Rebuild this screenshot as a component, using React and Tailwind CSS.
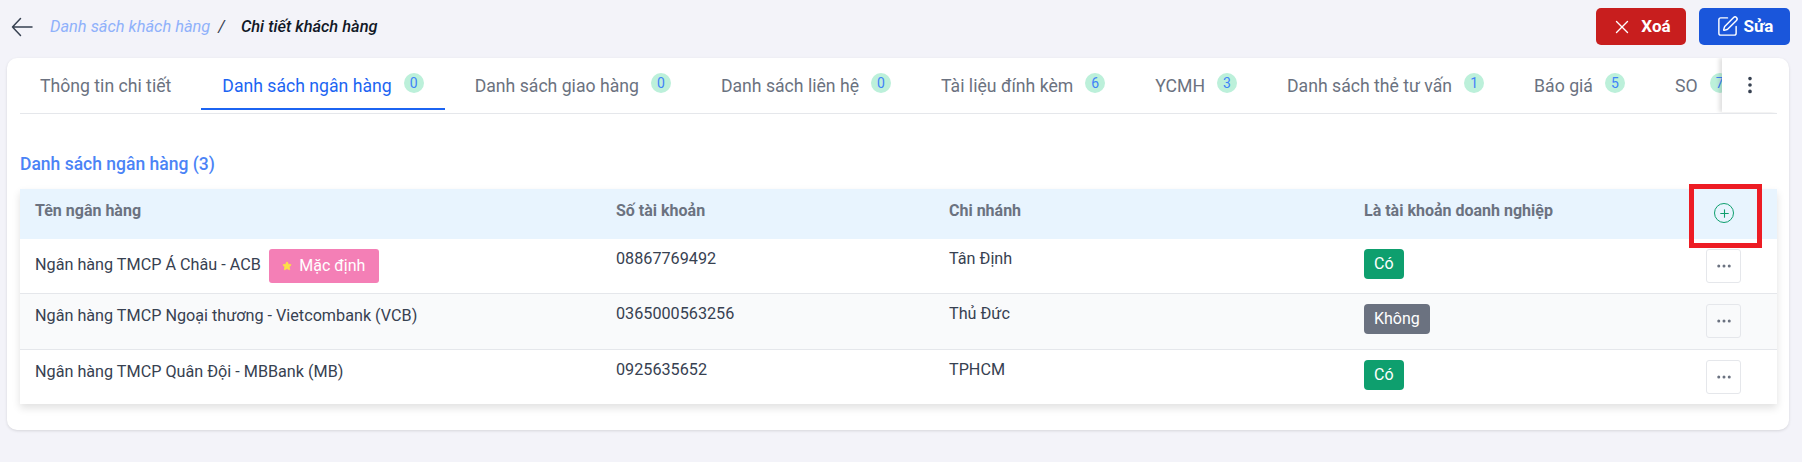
import React from "react";
import { X, SquarePen, MoreVertical, Plus, MoreHorizontal, Star } from "lucide-react";

const tabs = [
  ["Thông tin chi tiết", null],
  ["Danh sách ngân hàng", 0],
  ["Danh sách giao hàng", 0],
  ["Danh sách liên hệ", 0],
  ["Tài liệu đính kèm", 6],
  ["YCMH", 3],
  ["Danh sách thẻ tư vấn", 1],
  ["Báo giá", 5],
  ["SO", 7],
];

const rows = [
  { name: "Ngân hàng TMCP Á Châu - ACB", acc: "08867769492", branch: "Tân Định", corp: true, def: true, h: "h-[54px]", bg: "bg-white" },
  { name: "Ngân hàng TMCP Ngoại thương - Vietcombank (VCB)", acc: "0365000563256", branch: "Thủ Đức", corp: false, h: "h-[56px]", bg: "bg-[#f9fafb]" },
  { name: "Ngân hàng TMCP Quân Đội - MBBank (MB)", acc: "0925635652", branch: "TPHCM", corp: true, h: "h-[55px]", bg: "bg-white" },
];

export default function App() {
  return (
    <div className="h-[462px] w-[1802px] overflow-hidden bg-[#f3f3f9] font-['Roboto',sans-serif]">
      <div className="flex h-[58px] items-start justify-between pl-[11px] pr-[12px] pt-[8px]">
        <div className="flex items-center pt-[7px]">
          <svg width="22" height="20" viewBox="0 0 22 20" fill="none" stroke="#374151" strokeWidth="1.5" strokeLinecap="round" strokeLinejoin="round">
            <path d="M21 10H1.5M9.5 1.5L1.5 10L9.5 18.5" />
          </svg>
          <span className="ml-[17px] text-[16.4px] italic leading-[24px] text-[#8fb1fb]">Danh sách khách hàng</span>
          <span className="ml-[8px] text-[16.4px] italic leading-[24px] text-[#374151]">/</span>
          <span className="ml-[16px] text-[16.4px] font-medium italic leading-[24px] text-[#111827]">Chi tiết khách hàng</span>
        </div>
        <div className="flex gap-[13px]">
          <button className="flex h-[37px] w-[90px] items-center justify-center gap-[8px] rounded-[5px] bg-[#c81e1e] text-[17px] font-bold text-white">
            <X className="h-[22px] w-[22px]" strokeWidth={1.5} />
            Xoá
          </button>
          <button className="flex h-[37px] w-[91px] items-center justify-center gap-[5px] rounded-[5px] bg-[#1a56db] text-[17px] font-bold text-white">
            <SquarePen className="h-[23px] w-[23px]" strokeWidth={1.5} />
            Sửa
          </button>
        </div>
      </div>

      <div className="ml-[7px] h-[372px] w-[1782px] rounded-[10px] bg-white pl-[13px] pr-[12px] shadow-[0_1px_3px_rgba(0,0,0,0.12)]">
        <div className="relative h-[56px] overflow-hidden border-b border-[#e5e7eb]">
          <div className="flex w-[1900px] gap-[10px]">
            {tabs.map(([label, n], i) => (
              <div
                key={label}
                className={
                  i === 1
                    ? "relative flex h-[52px] items-start border-b-2 border-[#1c64f2] px-[21px] pt-[15px] text-[17.65px] text-[#1c64f2]"
                    : "relative flex h-[52px] items-start px-[20px] pt-[15px] text-[17.65px] text-[#6b7280]"
                }
              >
                <span className="mt-[1px] leading-[24px]">{label}</span>
                {n !== null && (
                  <span className="ml-[12px] flex h-[20px] w-[20px] items-center justify-center rounded-full bg-[#bcf0da] text-[14px] text-[#3f83f8]">
                    {n}
                  </span>
                )}
              </div>
            ))}
          </div>
          <div className="absolute right-0 top-0 flex h-[54px] w-[55px] items-center justify-center bg-white shadow-[-3px_0_4px_rgba(0,0,0,0.12)]">
            <MoreVertical className="h-[22px] w-[22px] text-[#374151]" strokeWidth={2} />
          </div>
        </div>

        <div className="h-[75px] pt-[39px] text-[17.5px] font-medium leading-[22px] text-[#4b83f6]">
          Danh sách ngân hàng (3)
        </div>

        <div className="relative shadow-[0_4px_8px_rgba(0,0,0,0.12)]">
          <table className="w-full table-fixed border-collapse text-[16.2px]">
            <colgroup>
              <col className="w-[581px]" />
              <col className="w-[333px]" />
              <col className="w-[415px]" />
              <col className="w-[342px]" />
              <col />
            </colgroup>
            <thead>
              <tr className="h-[50px] bg-[#e8f4fe] text-left align-top text-[16px] text-[#6b7280]">
                <th className="pl-[15px] pt-[12px] font-bold leading-[20px]">Tên ngân hàng</th>
                <th className="pl-[15px] pt-[12px] font-bold leading-[20px]">Số tài khoản</th>
                <th className="pl-[15px] pt-[12px] font-bold leading-[20px]">Chi nhánh</th>
                <th className="pl-[15px] pt-[12px] font-bold leading-[20px]">Là tài khoản doanh nghiệp</th>
                <th className="pl-[23px] pt-[14px] align-top">
                  <span className="flex h-[20px] w-[20px] items-center justify-center rounded-full border-[1.5px] border-[#0e9f6e] text-[#0e9f6e]">
                    <Plus className="h-[13px] w-[13px]" strokeWidth={2} />
                  </span>
                </th>
              </tr>
            </thead>
            <tbody className="text-[#374151]">
              {rows.map((r, i) => (
                <tr key={r.name} className={`${r.h} ${r.bg} ${i < 2 ? "border-b border-[#e5e7eb]" : ""} align-top`}>
                  <td className="pl-[15px] pt-[10px]">
                    {r.def ? (
                      <div className="flex items-start">
                        <span className="pt-[6px] leading-[20px]">{r.name}</span>
                        <span className="ml-[8px] flex h-[34px] w-[110px] items-center justify-center gap-[7px] rounded-[3px] bg-[#f47fb6] text-[16px] text-white">
                          <Star className="h-[10px] w-[10px] fill-[#fde047] text-[#fde047]" />
                          Mặc định
                        </span>
                      </div>
                    ) : (
                      <span className="leading-[20px]">{r.name}</span>
                    )}
                  </td>
                  <td className="pl-[15px] pt-[10px] leading-[20px]">{r.acc}</td>
                  <td className="pl-[15px] pt-[10px] leading-[20px]">{r.branch}</td>
                  <td className="pl-[15px] pt-[10px]">
                    <span
                      className={`inline-flex h-[30px] items-center rounded-[4px] px-[10px] text-[16px] text-white ${r.corp ? "bg-[#0e9f6e]" : "bg-[#6b7280]"}`}
                    >
                      {r.corp ? "Có" : "Không"}
                    </span>
                  </td>
                  <td className="pl-[15px] pt-[10px]">
                    <button className={`flex h-[34px] w-[35px] items-center justify-center rounded-[3px] border border-[#e5e7eb] text-[#6b7280] ${r.bg}`}>
                      <MoreHorizontal className="h-[18px] w-[18px]" strokeWidth={2} />
                    </button>
                  </td>
                </tr>
              ))}
            </tbody>
          </table>
          <div className="pointer-events-none absolute left-[1669px] top-[-5px] h-[64px] w-[73px] border-[5px] border-[#ed1c24]" />
        </div>
      </div>
    </div>
  );
}
